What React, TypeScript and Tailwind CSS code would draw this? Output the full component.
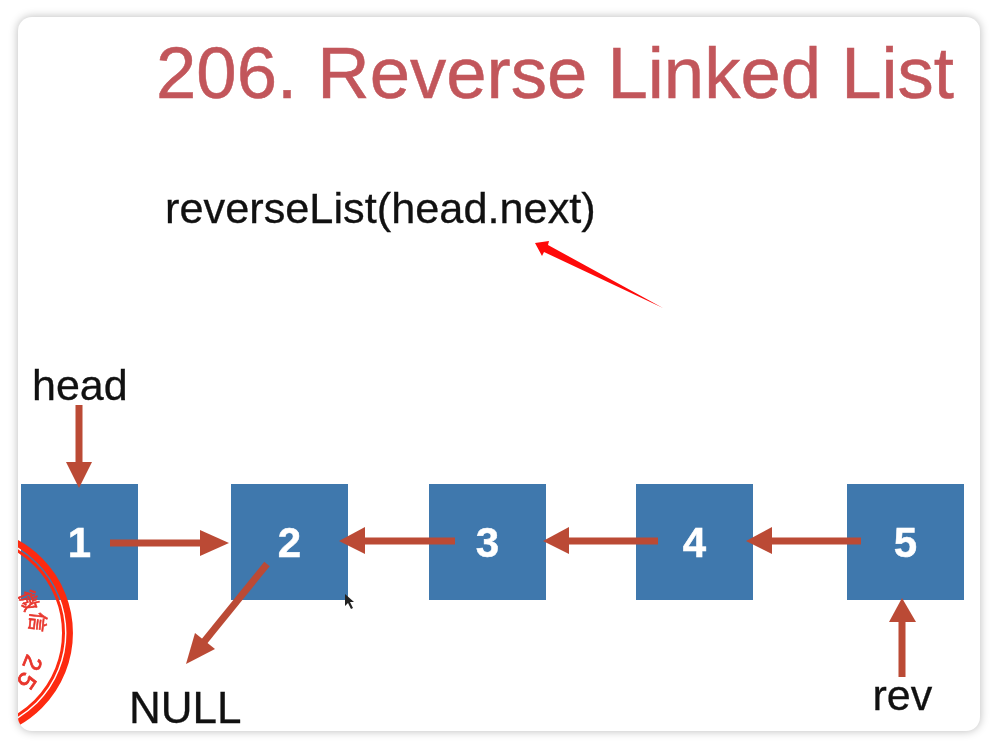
const NODES = [
  { label: "1", margin: "ml-[3px]" },
  { label: "2", margin: "ml-[93px]" },
  { label: "3", margin: "ml-[81px]" },
  { label: "4", margin: "ml-[90px]" },
  { label: "5", margin: "ml-[94px]" },
];

function Arrow({ line, head }: { line: [number, number, number, number]; head: string }) {
  return (
    <>
      <line x1={line[0]} y1={line[1]} x2={line[2]} y2={line[3]} stroke="#bb4a35" strokeWidth="7" />
      <polygon points={head} fill="#bb4a35" />
    </>
  );
}

function Stamp() {
  return (
    <svg className="absolute left-0 top-0 h-full w-full" viewBox="18 17 962 714">
      <circle cx="-33" cy="633" r="102.7" fill="none" stroke="#fd2a10" strokeWidth="6.5" />
      <circle cx="-33" cy="633" r="96.5" fill="none" stroke="#fd2a10" strokeWidth="3" />
      <g fill="#e8352c" stroke="#e8352c" strokeWidth="0.6" fontSize="20" fontFamily="'Noto Sans CJK SC', sans-serif" textAnchor="middle" dominantBaseline="central">
        <text transform="translate(30 600) rotate(68)">微</text>
        <text transform="translate(39 622) rotate(96)">信</text>
      </g>
      <g fill="#e8352c" stroke="#e8352c" strokeWidth="0.8" fontSize="25" fontFamily="'Liberation Sans', sans-serif" textAnchor="middle" dominantBaseline="central">
        <text transform="translate(33 663) rotate(112)">2</text>
        <text transform="translate(27 681) rotate(124)">5</text>
      </g>
    </svg>
  );
}

function Arrows() {
  return (
    <svg className="absolute left-0 top-0 h-full w-full" viewBox="18 17 962 714">
      <Arrow line={[79, 405, 79, 464]} head="66,462 92,462 79,488" />
      <Arrow line={[110, 543, 202, 543]} head="200,530 200,556 229,543" />
      <Arrow line={[455, 541, 363, 541]} head="365,527 365,554 339,541" />
      <Arrow line={[658, 541, 567, 541]} head="569,527 569,554 543,541" />
      <Arrow line={[861, 541, 770, 541]} head="772,527 772,554 746,541" />
      <Arrow line={[267, 564, 203, 643]} head="215,649 195,633 186,664" />
      <Arrow line={[902, 677, 902, 620]} head="889,622 916,622 902,598" />
      <polygon points="535,243 549,241 548,245 663,308 544,252 542,256" fill="#fe0a0a" />
      {/* mouse pointer */}
      <polygon points="345,594 345,606 348,603 351,609 353,608 350,602 354,602" fill="#222" />
    </svg>
  );
}

export default function App() {
  return (
    <div className="h-[749px] w-[998px] overflow-hidden bg-white px-[18px] pb-[18px] pt-[17px] font-['Liberation_Sans',sans-serif]">
      <div className="relative flex h-[714px] flex-col overflow-hidden rounded-[14px] bg-white shadow-[0_0_10px_rgba(0,0,0,0.28)] blur-[0.4px]">
        <h1 className="mt-[16px] pr-[26px] text-right text-[72.5px] leading-[80px] text-[#c2565b] [-webkit-text-stroke:0.5px_#c2565b]">206. Reverse Linked List</h1>
        <p className="ml-[147px] mt-[71px] text-[43.3px] leading-[48px] text-[#111] [-webkit-text-stroke:0.3px_#111]">reverseList(head.next)</p>

        <div className="relative mt-[129px] h-[48px] pl-[14px] text-[43px] leading-[48px] text-[#111] [-webkit-text-stroke:0.3px_#111]">head</div>

        <div className="mt-[75px] flex">
          {NODES.map((node) => (
            <div
              key={node.label}
              className={`flex h-[116px] w-[117px] items-center justify-center bg-[#3f78ad] text-[42px] font-bold text-white [-webkit-text-stroke:0.5px_#fff] ${node.margin}`}
            >
              {node.label}
            </div>
          ))}
        </div>

        <div className="mt-[66px] flex h-[48px] items-start text-[#111] [-webkit-text-stroke:0.3px_#111]">
          <span className="ml-[111px] mt-[18px] text-[44px] leading-[48px]">NULL</span>
          <span className="ml-[631px] mt-[5px] text-[43px] leading-[48px]">rev</span>
        </div>

        <Stamp />
        <Arrows />
      </div>
    </div>
  );
}
